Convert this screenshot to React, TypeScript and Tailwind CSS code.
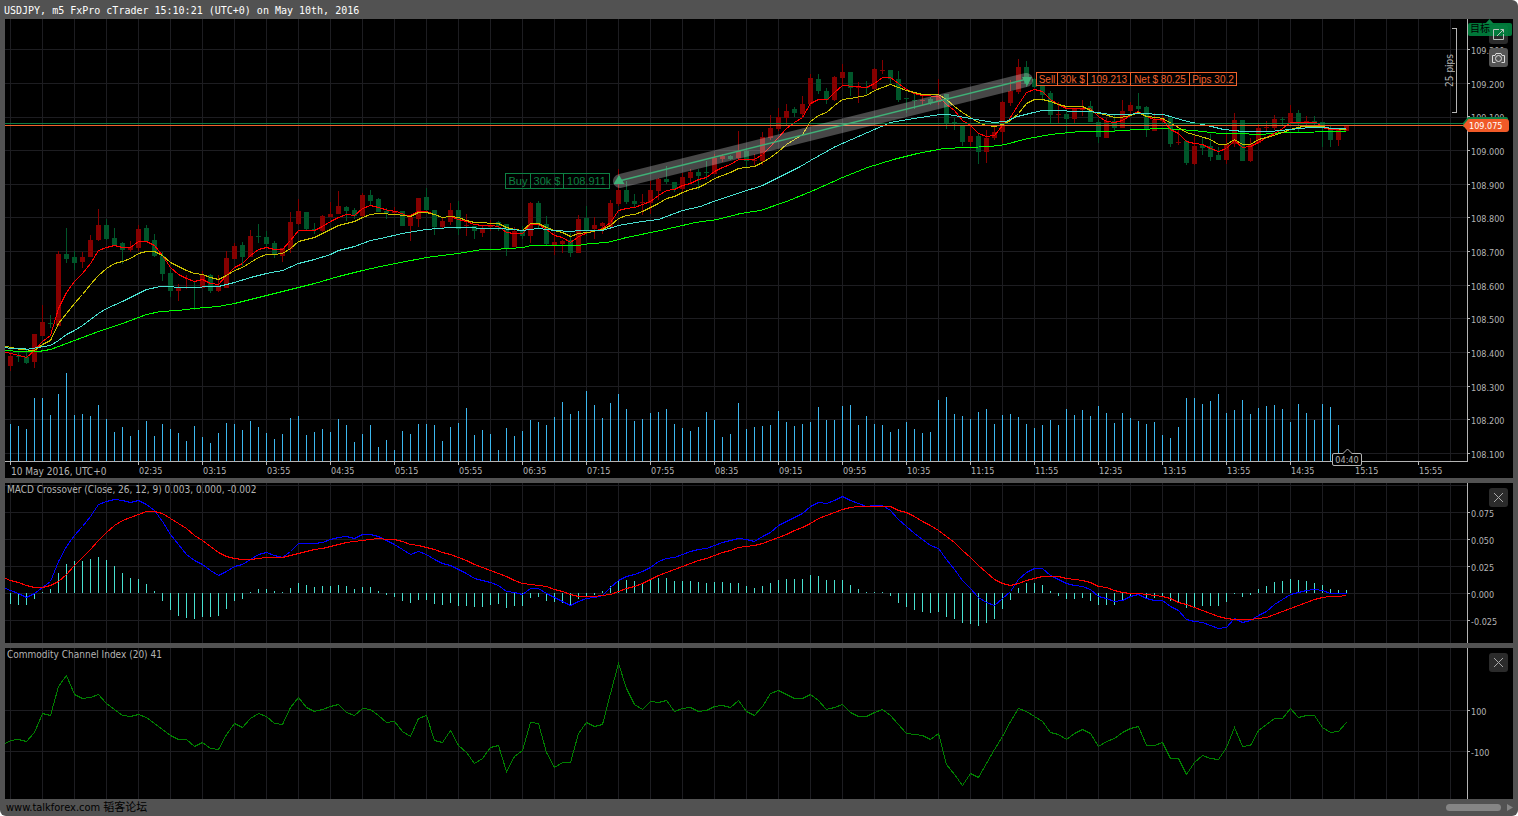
import React from "react";

const STEP = 8;
const FIRST_BAR_X = 10;
const barX = (i: number) => FIRST_BAR_X + i * STEP;
const parse = (s: string) => s.trim().split(/\s+/).map((v) => v.split(",").map(Number));
const list = (s: string) => s.trim().split(/[\s,]+/).map(Number);

// One candle per entry: rising flag, high, body top, body bottom, low.
const CANDLES = parse(`
1,353,356,366,371 0,351,356,357,362 0,350,357,363,364 1,334,334,362,368 1,305,322,336,336 0,315,323,324,328
1,251,254,326,326 0,228,254,259,263 0,251,257,263,270 1,252,257,262,268 1,235,240,257,257 1,209,225,240,241
0,219,225,239,240 0,228,238,246,246 0,242,243,250,264 1,241,247,250,252 1,225,229,248,251 0,225,228,241,241
0,234,240,256,257 0,252,256,274,281 0,269,273,291,297 1,284,287,291,301 1,275,287,288,289 0,281,287,288,310
1,271,275,288,288 0,274,275,291,293 1,275,287,291,292 1,251,258,288,288 1,243,246,259,259 0,242,245,257,266
1,230,236,257,257 0,224,236,237,243 0,231,237,244,247 0,241,243,255,258 1,248,248,256,262 1,212,222,249,253
1,199,211,224,225 0,212,212,229,230 0,223,229,230,234 1,215,216,231,232 1,202,214,217,217 1,191,206,214,214
0,206,207,211,221 0,208,210,216,219 1,193,195,216,218 0,190,195,201,205 0,198,199,212,212 0,208,211,213,219
1,207,211,213,214 0,211,211,226,226 1,216,217,226,241 1,198,198,219,227 0,188,197,210,214 0,210,210,227,235
1,218,221,227,228 1,203,210,222,225 0,201,210,229,235 1,214,225,226,236 0,226,226,231,239 1,225,228,233,237
1,220,226,227,231 0,221,222,226,231 0,224,224,249,256 1,227,231,247,247 0,226,230,236,239 1,202,203,236,243
0,201,203,224,229 0,216,224,244,245 1,232,242,245,255 1,240,241,244,253 0,233,240,253,257 1,215,219,253,253
0,206,218,231,236 1,217,225,229,239 1,222,223,226,234 1,200,203,227,227 1,169,190,204,206 0,181,190,202,204
0,194,201,204,208 1,194,202,203,215 1,181,190,203,214 1,178,179,191,200 0,166,179,182,184 0,182,182,189,192
1,173,177,189,193 1,169,172,178,183 0,169,172,176,190 0,161,172,173,180 1,154,158,174,174 1,154,156,159,162
0,155,156,159,160 1,131,151,158,159 0,148,151,161,168 1,154,160,161,165 1,132,137,161,165 1,115,128,138,140
1,108,117,129,131 1,104,111,118,126 0,107,109,113,117 1,96,104,114,118 1,74,78,104,106 0,74,79,91,94
0,88,91,100,104 1,76,77,100,101 1,64,72,78,86 0,72,72,88,96 1,82,87,88,103 0,81,87,88,94
1,68,69,89,90 1,60,70,71,74 0,70,70,79,84 0,71,79,100,102 0,98,98,99,113 0,94,100,101,109
1,94,100,101,105 0,97,99,103,105 1,79,95,102,105 0,94,94,123,129 0,118,122,123,130 0,125,126,142,146
1,124,136,142,146 0,134,136,152,164 1,130,138,152,163 1,126,132,138,140 1,101,102,132,143 1,80,91,103,106
1,59,67,92,94 0,61,67,84,87 0,78,79,87,88 0,85,86,95,101 0,91,93,115,123 1,102,114,115,123
0,110,114,119,134 1,108,108,119,123 1,100,108,110,116 0,101,106,122,122 0,120,122,137,143 1,118,121,138,138
0,115,121,128,132 1,100,111,128,128 1,102,105,111,115 0,93,106,109,113 0,106,107,130,137 1,113,120,131,131
1,113,118,121,124 0,117,118,144,147 1,130,142,143,145 0,140,141,163,165 1,136,146,164,165 0,137,145,148,155
0,134,146,157,161 0,147,155,160,160 1,134,144,160,164 1,113,120,144,147 0,120,120,161,161 1,138,144,161,162
1,124,128,143,144 1,121,127,128,132 1,115,119,128,130 0,117,119,120,125 1,105,113,123,125 0,110,113,123,133
1,116,121,122,125 0,116,121,122,125 0,122,122,127,147 0,126,128,140,147 1,129,130,140,146 1,125,126,131,131`);

const MA_FAST = `5,352 11,353 26,357 34,350 42,341 50,335 58,308 66,292 74,281 82,273 90,263 98,250 106,247 114,245 122,247 130,247 138,241 146,241 154,245 162,255 170,267 178,274 186,278 194,281 202,279 210,283 218,284 226,275 234,267 242,263 250,255 258,249 266,247 274,249 282,249 290,240 298,230 314,230 322,226 330,221 338,217 346,214 354,215 362,208 370,205 378,207 388,210 396,211 406,215 410,215 418,211 426,211 434,214 442,217 450,216 458,219 466,221 474,224 482,225 490,225 498,226 506,232 514,233 522,233 530,224 538,224 546,229 554,235 562,237 570,242 580,235 588,232 596,230 602,228 610,222 618,210 626,208 634,207 642,204 650,201 658,195 666,190 674,189 682,185 690,183 698,179 706,177 714,171 722,167 730,164 738,159 754,159 762,154 770,146 778,137 786,128 794,122 802,117 810,103 818,99 827,99 834,92 842,85 866,87 874,83 882,77 890,77 898,83 906,89 914,93 922,95 938,96 946,104 954,110 962,120 970,125 978,133 986,136 994,135 1002,125 1008,120 1018,104 1026,92 1034,89 1042,91 1050,99 1058,104 1066,108 1090,108 1098,116 1106,121 1114,122 1122,120 1130,115 1138,111 1146,116 1154,119 1162,119 1170,129 1178,133 1186,141 1194,143 1202,144 1210,148 1218,151 1226,148 1234,140 1242,147 1250,146 1258,142 1266,137 1274,133 1282,128 1290,122 1316,122 1322,127 1330,129 1346,129`;
const MA_MEDIUM = `5,346 11,347 20,349 34,350 42,344 50,340 58,323 66,313 74,303 82,294 90,284 98,275 106,268 114,263 122,261 130,258 138,253 146,251 154,251 162,255 170,262 178,266 186,270 194,273 202,274 210,277 218,279 226,275 234,270 242,267 250,262 258,257 266,254 274,254 282,253 290,248 298,241 306,239 314,237 322,233 330,229 338,225 346,223 354,221 362,217 370,214 378,213 396,214 402,215 410,216 418,212 426,212 434,214 442,217 450,216 458,217 466,220 474,222 498,223 506,227 514,229 522,230 530,223 538,223 546,227 554,230 562,232 570,236 578,233 588,232 602,229 610,225 618,218 626,215 634,214 642,211 650,207 658,203 666,198 674,196 682,192 690,189 698,187 706,183 714,178 722,175 730,172 738,168 754,166 762,162 770,157 778,151 786,144 794,139 802,134 810,121 818,115 826,112 834,105 842,99 850,98 866,95 874,90 882,87 890,84 898,87 906,90 914,92 922,94 938,94 946,99 954,106 962,112 970,117 978,122 986,125 994,126 1002,124 1010,120 1018,113 1026,103 1034,99 1042,99 1050,101 1058,104 1066,106 1082,106 1094,112 1104,114 1114,117 1120,117 1130,115 1138,112 1146,116 1156,117 1162,118 1173,124 1186,132 1200,136 1210,139 1218,144 1226,144 1234,139 1242,144 1250,144 1258,139 1270,136 1282,132 1290,129 1302,126 1322,126 1330,128 1346,129`;
const MA_SLOW = `5,347 10,348 24,348 26,349 50,345 58,340 66,334 74,330 82,325 90,319 98,313 106,308 122,301 138,293 146,289 160,286 186,287 218,286 234,282 250,277 266,273 282,270 298,263 314,259 330,254 338,250 354,246 370,240 380,238 402,233 426,229 450,227 500,228 522,230 538,228 554,230 570,231 580,230 602,230 618,225 642,221 658,219 682,210 700,206 713,201 740,192 762,185 780,176 800,166 810,160 835,146 867,132 890,122 913,118 940,114 948,114 970,118 993,122 1005,121 1017,116 1033,112 1042,110 1090,111 1110,114 1126,114 1140,113 1163,114 1173,117 1187,121 1207,125 1223,129 1243,131 1270,131 1290,129 1310,127 1346,128`;
const MA_LONG = `5,350 20,351 38,351 50,349 58,346 74,340 98,331 122,323 146,314 160,311 178,310 194,308 218,306 234,303 266,295 282,291 298,287 314,283 338,276 362,270 380,266 400,262 426,257 458,253 482,249 493,249 523,247 530,245 577,245 590,243 607,242 626,237 660,230 695,222 717,219 740,213 760,210 786,201 813,190 842,177 867,167 893,159 917,153 943,148 990,146 1005,144 1023,139 1039,136 1050,134 1080,131 1107,131 1137,129 1163,128 1193,130 1220,133 1237,133 1260,134 1283,132 1346,131`;

const VOLUME = list(`
424,426,429,398,398,415,394,373,415,414,416,405,419,432,427,436,430,421,436,424,429,433,441,426,437,443,433,423,424,430,421,427,
433,439,434,418,416,435,432,429,432,419,425,442,434,425,447,440,450,431,434,424,424,425,441,427,423,408,435,430,434,450
428,436,431,420,422,425,417,402,414,411,391,405,418,403,394,409,421,419,413,412,409,424,428,431,427,412,420,437,434,403,429,427,
426,425,411,422,426,424,422,407,420,420,406,405,425,416,424,425,432,429,422,429,433,432,400,397,414,416,419,412,409,424
415,414,417,424,428,425,420,425,409,415,410,416,406,413,423,413,418,421,424,422,435,438,427,398,398,404,401,394,413,410,400,414,
408,406,405,409,422,404,413,420,404,407,425`);

const HISTOGRAM = list(`
604,605,605,599,592,589,573,564,561,561,559,557,560,566,573,578,579,584,591,601,610,616,618,619,617,617,616,609,601,599,592,589,
589,591,592,588,583,585,587,586,586,585,586,589,587,587,591,595,597,601,603,600,600,604,605,603,606,606,607,607,605,604,608,606,
606,598,597,601,602,603,605,599,596,595,591,586,581,580,581,583,580,578,578,581,581,581,582
583,582,582,583,583,586,588,586,583,580,579,579,579,575,576,580,580,580,585,589,592,592,592,596,603,607,610,612,613,612,617,619,
623,624,626,623,619,609,600,588,583,583,585,591,596,599,599,598,601,605,605,605,601,596,594,598,598,597,601,603,608,607,606,606,
606,602,594,597,595,589,586,582,581,579,580,581,583,585,589,590,590`);

const MACD = list(`
590,593,597,593,587,581,561,546,535,526,516,504,501,499,500,502,500,504,510,521,534,544,554,560,564,570,575,571,566,564,559,554,
552,555,557,551,543,543,543,542,539,537,536,538,534,534,536,540,544,549,554,551,554,559,563,565,569,573,578,580,582,585,591,592,
594,588,588,593,597,601,605,601,598,597,595,587,580,576,574,571,567,561,558,557,554,551,549
548,545,542,540,538,539,541,536,532,525,521,517,513,506,502,503,500,496,500,503,506,505,505,510,519,526,533,539,545,548,559,569,
580,588,597,602,605,598,591,579,572,568,568,575,579,583,585,586,589,596,598,601,600,596,594,598,600,600,606,610,619,621,622,625,
628,627,618,622,620,615,611,604,599,594,592,590,589,590,593,593,593`);

const SIGNAL = list(`
580,582,585,587,587,585,581,574,565,557,549,540,532,525,520,517,514,511,511,513,518,523,528,535,540,546,552,556,558,559,559,558,
557,557,557,555,553,551,549,548,546,544,542,541,540,539,538,539,539,541,544,545,547,549,552,554,557,560,564,567,570,573,576,580,
583,584,585,586,589,591,594,596,596,596,595,594,591,588,586,583,579,575,572,569,566,563,560,558,555,552,550,547,546,545,543,540,
537,534,530,527,523,518,515,512,509,507,506,506,506,506,506,510,512,516,521,525,530,536,542,550,557,565,572,579,583,585,583,580,
578,576,576,576,578,579,580,582,586,587,590,592,593,593,594,595,596,598,602,604,607,610,613,616,618,619,619,619,618,617,614,611,
608,605,602,599,597,596,596,595`);

const CCI = list(`
740,739,741,732,713,715,686,675,694,698,697,694,703,709,715,716,714,717,723,729,735,739,739,746,742,748,749,734,723,727,718,713,
716,723,724,707,697,707,711,709,706,704,712,715,708,709,715,722,721,731,736,718,715,740,742,730,745,752,763,758,747,745,771,756,
750,722,723,752,767,762,762,733,722,726,724,693,663,688,704,709,701,702,700,711,708,707,711,710,706,705,707,700,711,715,706,693,
690,694,698,698,694,700,709,707,704,712,716,716,712,709,715,724,733,734,735,739,733,764,774,785,773,777,763,749,736,721,708,711,
716,721,732,734,739,733,729,733,746,741,738,732,728,726,745,745,742,758,758,774,762,755,758,759,747,727,746,745,730,724,718,718,
708,717,715,715,727,732,731,722`);

const PRICES = ["109.300", "109.200", "109.100", "109.000", "108.900", "108.800", "108.700", "108.600", "108.500", "108.400", "108.300", "108.200", "108.100"];
const TIMES = ["02:35", "03:15", "03:55", "04:35", "05:15", "05:55", "06:35", "07:15", "07:55", "08:35", "09:15", "09:55", "10:35", "11:15", "11:55", "12:35", "13:15", "13:55", "14:35", "15:15", "15:55"];

const series = (start: string, values: number[]) => start + " " + values.map((y, i) => `${barX(i)},${y}`).join(" ");

function Grid({ rows }: { rows: number[] }) {
  return (
    <g stroke="#1d1d21">
      {Array.from({ length: 80 }, (_, i) => (
        <line key={i} x1={10.5 + i * 32} x2={10.5 + i * 32} y1={0} y2={900} />
      ))}
      {rows.map((y) => (
        <line key={y} x1={0} x2={4000} y1={y + 0.5} y2={y + 0.5} />
      ))}
    </g>
  );
}

function Line({ points, color }: { points: string; color: string }) {
  return <polyline points={points} fill="none" stroke={color} transform="translate(0.5 0.5)" />;
}

function Plot({ top, label, rows, children }: { top: number; label: string; rows: number[]; children: React.ReactNode }) {
  return (
    <svg role="img" aria-label={label} className="block h-full w-full" shapeRendering="crispEdges">
      <g transform={`translate(-5 ${-top})`}>
        <Grid rows={rows} />
        {children}
      </g>
    </svg>
  );
}

function AxisLabels({ labels }: { labels: string[] }) {
  return (
    <>
      {labels.map((t) => (
        <div key={t} className="flex h-3 items-start">
          <span className="mt-[5px] mr-px h-px w-[2px] bg-[#b4b4b4]" />
          <span className="leading-[14px]">{t}</span>
        </div>
      ))}
    </>
  );
}

function CloseButton({ label }: { label: string }) {
  return (
    <button aria-label={label} className="absolute top-[5px] right-[5px] flex h-[19px] w-[19px] items-center justify-center rounded-[3px] bg-[#2b2b2b]">
      <svg width="11" height="11" viewBox="0 0 11 11" stroke="#a8a8a8" fill="none">
        <path d="M1 1 10 10M10 1 1 10" />
      </svg>
    </button>
  );
}

function PricePanel() {
  return (
    <section className="relative flex h-[459px] bg-black">
      <div className="flex min-w-0 flex-1 flex-col">
        <div className="relative h-[442px]">
          <Plot top={19} label="Price chart" rows={[49, 83, 117, 150, 184, 217, 251, 285, 318, 352, 386, 419, 453]}>
            {VOLUME.map((y, i) => (
              <rect key={i} x={barX(i)} y={y} width={1} height={461 - y} fill="#3cb7ee" />
            ))}
            {CANDLES.map(([up, high, top, bottom, low], i) => (
              <g key={i} fill={up ? "#850000" : "#00562a"}>
                <rect x={barX(i)} y={high} width={1} height={low - high} />
                <rect x={barX(i) - 2} y={top} width={5} height={bottom - top} />
              </g>
            ))}
            <Line points={MA_LONG} color="#00ff00" />
            <Line points={MA_FAST} color="#ff0000" />
            <Line points={MA_MEDIUM} color="#c8c000" />
            <Line points={MA_SLOW} color="#48e0d0" />
            <rect x={0} y={123} width={4000} height={1} fill="#0d7a43" />
            <rect x={0} y={125} width={4000} height={1} fill="#f0622c" />
            <g shapeRendering="auto">
              <line x1={620} y1={181} x2={1026} y2={80} stroke="#ffffff" strokeOpacity={0.28} strokeWidth={14} strokeLinecap="round" />
              <line x1={619} y1={181} x2={1027} y2={79} stroke="#3fb077" strokeWidth={1.5} />
              <path d="M619 175 624.500 184H613.500Z" fill="#3fb077" />
              <path d="M1027 86 1022 77H1032Z" fill="#3fb077" />
            </g>
          </Plot>
          <div className="absolute top-[154px] left-[500px] flex h-4 items-stretch divide-x divide-[#0d8043] border border-[#0d8043] text-[11px] leading-[15px] text-[#0d8043]">
            <span className="w-[25px] text-center">Buy</span>
            <span className="w-[33px] text-center">30k $</span>
            <span className="w-[45px] text-center">108.911</span>
          </div>
          <div className="absolute top-[53px] left-[1031px] flex h-[14px] items-stretch divide-x divide-[#f0622c] border border-[#f0622c] text-[10px] leading-[13px] text-[#f0622c]">
            <span className="w-[21px] text-center">Sell</span>
            <span className="w-[30px] text-center">30k $</span>
            <span className="w-[43px] text-center">109.213</span>
            <span className="w-[59px] text-center">Net $ 80.25</span>
            <span className="w-[46px] text-center">Pips 30.2</span>
          </div>
          <div className="absolute top-[9px] right-[10px] flex h-[85px] items-center">
            <span className="rotate-180 font-['DejaVu_Sans_Condensed','DejaVu_Sans',sans-serif] text-[10px] leading-[12px] text-[#b4b4b4] [writing-mode:vertical-rl]">25 pips</span>
            <span className="-ml-1 h-full w-[5px] border-y border-r border-[#b4b4b4]" />
          </div>
        </div>
        <div className="relative flex h-[17px] border-t border-[#b4b4b4] pl-[5px] font-['DejaVu_Sans_Condensed','DejaVu_Sans',sans-serif] text-[9px] leading-[19px] whitespace-nowrap text-[#b4b4b4]">
          <span className="flex w-32 shrink-0 text-[10px]">
            <span className="h-[3px] w-px bg-[#b4b4b4]" />
            10 May 2016, UTC+0
          </span>
          {TIMES.map((t) => (
            <span key={t} className="flex w-16 shrink-0">
              <span className="h-[3px] w-px bg-[#b4b4b4]" />
              {t}
            </span>
          ))}
          <div className="absolute -top-[9px] left-[1327px] h-[13px] w-[30px] rounded-[2px] border border-[#b4b4b4] bg-black text-center leading-[12px]">
            04:40
            <svg className="absolute -top-[6px] left-[9px]" width="11" height="6" viewBox="0 0 11 6">
              <path d="M.5 6 5.500 1 10.500 6" fill="#000" stroke="#b4b4b4" />
            </svg>
          </div>
        </div>
      </div>
      <div className="relative h-[443px] w-[46px] shrink-0 border-l border-[#b4b4b4]">
        <div className="flex h-full flex-col justify-between pt-[25px] pb-[2px] font-['DejaVu_Sans_Condensed','DejaVu_Sans',sans-serif] text-[9px] text-[#b4b4b4]">
          <AxisLabels labels={PRICES} />
        </div>
        <svg className="absolute top-[98px] -left-[5px]" width="46" height="16" viewBox="0 0 46 16">
          <path d="M5 0H43q2 0 2 2V10H0V6Z" fill="#0d8043" />
          <path d="M5.500 2H43q3 0 3 3V12q0 3-3 3H5.500L0 8.500Z" fill="#f05a28" />
        </svg>
        <span className="absolute top-[101px] left-px font-['DejaVu_Sans_Condensed','DejaVu_Sans',sans-serif] text-[9px] leading-[13px] text-white">109.075</span>
        <svg className="absolute top-0 left-[17px]" width="9" height="5" viewBox="0 0 9 5">
          <path d="M4.500 0 9 5H0Z" fill="#0d8043" />
        </svg>
        <div className="absolute top-[6px] right-[5px] h-[19px] w-[19px] rounded-[3px] bg-[#2b2b2b]" />
        <div className="absolute top-1 left-0 h-[13px] w-[44px] rounded-[2px] bg-[#00843f]/90 pl-[2px] text-[10px] leading-[12px] text-black">目标</div>
        <button aria-label="Detach chart" className="absolute top-[6px] right-[5px] flex h-[19px] w-[19px] items-center justify-center">
          <svg width="11" height="11" viewBox="0 0 11 11" fill="none" stroke="#b8c4bc">
            <path d="M6 .5H.5V10.500H10.500V5M7.500 .5H10.500V3.500M10.500 .5 4 7" />
          </svg>
        </button>
        <button aria-label="Take snapshot" className="absolute top-[29px] right-[5px] flex h-[19px] w-[19px] items-center justify-center rounded-[3px] bg-[#555]">
          <svg width="13" height="10" viewBox="0 0 13 10" fill="none" stroke="#dcdcdc">
            <path d="M3.500 9.500H.5V2.500H3L4 .5H9L10 2.500H12.500V9.500H9.500" />
            <circle cx="6.500" cy="5.500" r="3" />
          </svg>
        </button>
      </div>
    </section>
  );
}

function MacdPanel() {
  return (
    <section className="relative flex h-40 bg-black">
      <div className="relative min-w-0 flex-1">
        <Plot top={483} label="MACD crossover" rows={[485, 512, 539, 566, 593, 620]}>
          {HISTOGRAM.map((y, i) => (
            <rect key={i} x={barX(i)} y={Math.min(y, 593)} width={1} height={Math.max(1, Math.abs(y - 593))} fill="#48e0d0" />
          ))}
          <Line points={series("5,588", MACD)} color="#0000ff" />
          <Line points={series("5,578", SIGNAL)} color="#ff0000" />
        </Plot>
        <h2 className="absolute top-0 left-[2px] font-['DejaVu_Sans_Condensed','DejaVu_Sans',sans-serif] text-[10px] leading-[14px] text-[#b4b4b4]">
          MACD Crossover (Close, 26, 12, 9) 0.003, 0.000, -0.002
        </h2>
      </div>
      <div className="flex w-[46px] shrink-0 flex-col gap-[15px] border-l border-[#b4b4b4] pt-6 font-['DejaVu_Sans_Condensed','DejaVu_Sans',sans-serif] text-[9px] text-[#b4b4b4]">
        <AxisLabels labels={["0.075", "0.050", "0.025", "0.000", "-0.025"]} />
      </div>
      <CloseButton label="Close MACD Crossover" />
    </section>
  );
}

function CciPanel() {
  return (
    <section className="relative flex h-[151px] bg-black">
      <div className="relative min-w-0 flex-1">
        <Plot top={648} label="Commodity channel index" rows={[710, 751]}>
          <Line points={series("5,743", CCI)} color="#008000" />
        </Plot>
        <h2 className="absolute top-0 left-[2px] font-['DejaVu_Sans_Condensed','DejaVu_Sans',sans-serif] text-[10px] leading-[14px] text-[#b4b4b4]">
          Commodity Channel Index (20) 41
        </h2>
      </div>
      <div className="flex w-[46px] shrink-0 flex-col gap-[29px] border-l border-[#b4b4b4] pt-[57px] font-['DejaVu_Sans_Condensed','DejaVu_Sans',sans-serif] text-[9px] text-[#b4b4b4]">
        <AxisLabels labels={["100", "-100"]} />
      </div>
      <CloseButton label="Close Commodity Channel Index" />
    </section>
  );
}

export default function App() {
  return (
    <div className="bg-white font-['Liberation_Sans','Noto_Sans_CJK_SC',sans-serif]">
      <main className="flex min-h-screen flex-col overflow-hidden rounded-tr-md rounded-b-md bg-[#525252]">
        <header className="h-[19px] px-1">
          <h1 className="font-['DejaVu_Sans_Mono',monospace] text-[10px] leading-[21px] text-white">
            USDJPY, m5 FxPro cTrader 15:10:21 (UTC+0) on May 10th, 2016
          </h1>
        </header>
        <div className="flex flex-col gap-[5px] px-[5px]">
          <PricePanel />
          <MacdPanel />
          <CciPanel />
        </div>
        <footer className="flex h-[17px] items-center justify-between pr-[5px] pl-[6px]">
          <a href="#" className="font-['DejaVu_Sans_Condensed','DejaVu_Sans','Noto_Sans_CJK_SC',sans-serif] text-[11px] leading-[14px] text-black">
            www.talkforex.com 韬客论坛
          </a>
          <div className="flex items-center gap-[6px]">
            <span className="h-[7px] w-[55px] rounded-full bg-[#858585]" />
            <button aria-label="Scroll right">
              <svg className="block" width="6" height="7" viewBox="0 0 6 7">
                <path d="M0 0 6 3.500 0 7Z" fill="#858585" />
              </svg>
            </button>
          </div>
        </footer>
      </main>
    </div>
  );
}
